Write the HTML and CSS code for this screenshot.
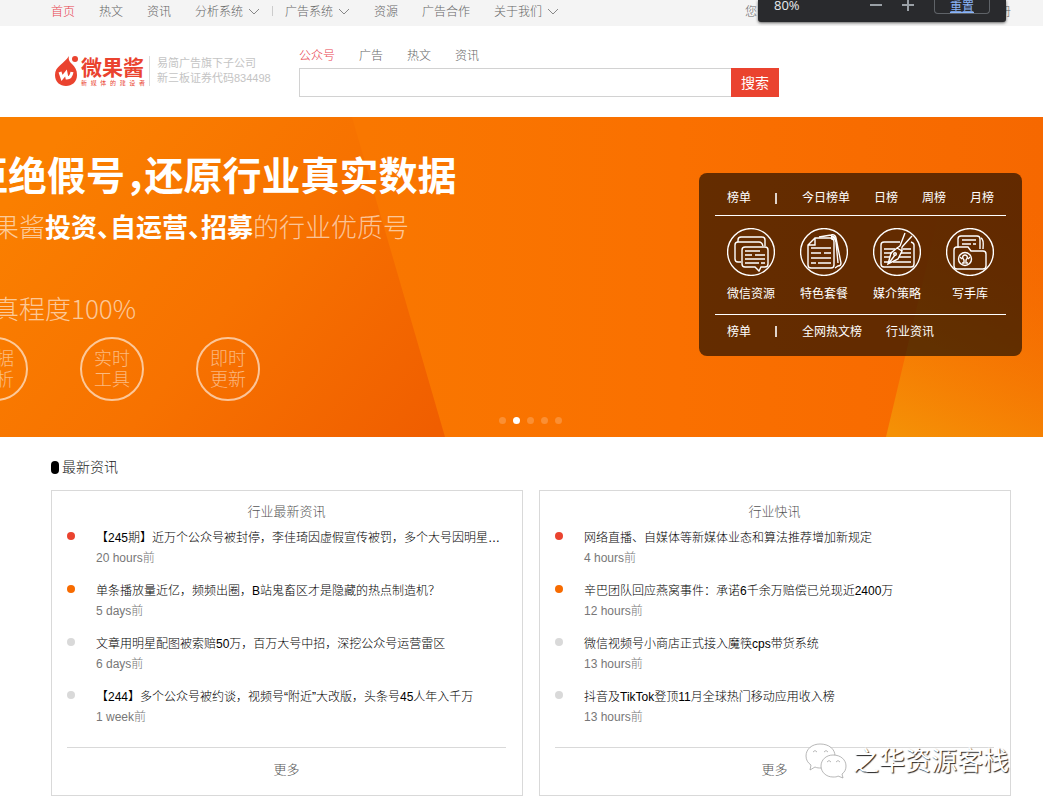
FILE: index.html
```html
<!DOCTYPE html>
<html lang="zh-CN">
<head>
<meta charset="utf-8">
<meta name="viewport" content="width=device-width, initial-scale=1">
<title>微果酱</title>
<link rel="stylesheet" href="styles.css">
</head>
<body>
<div class="topbar">
  <nav class="topnav" aria-label="主导航">
    <a class="active" href="#">首页</a>
    <a href="#">热文</a>
    <a href="#">资讯</a>
    <div class="topnav-pair">
      <a href="#">分析系统<svg class="chevron" viewBox="0 0 12 8"><path d="M1 1l5 5 5-5"/></svg></a>
      <span class="topnav-rule"></span>
      <a href="#">广告系统<svg class="chevron" viewBox="0 0 12 8"><path d="M1 1l5 5 5-5"/></svg></a>
    </div>
    <a href="#">资源</a>
    <a href="#">广告合作</a>
    <a href="#">关于我们<svg class="chevron" viewBox="0 0 12 8"><path d="M1 1l5 5 5-5"/></svg></a>
  </nav>
  <div class="account"><span>您</span><a href="#">册</a></div>
</div>

<div class="zoom-popup">
  <span class="zoom-value">80%</span>
  <button class="zoom-step" type="button" aria-label="缩小"><svg viewBox="0 0 12 12"><path d="M0 5h12"/></svg></button>
  <button class="zoom-step" type="button" aria-label="放大"><svg viewBox="0 0 12 12"><path d="M0 5h12M6 0v11"/></svg></button>
  <button class="zoom-reset" type="button">重置</button>
</div>

<header class="header">
  <a class="brand" href="#">
    <svg class="brand-mark" viewBox="0 0 24 32">
      <path class="brand-drop" d="M14 1C13 5 15 7 17 9C20 12 22 15 22 20C22 27 17 31 11 31C5 31 0 27 0 20C0 11 9 9 14 1Z"/>
      <circle class="brand-drop" cx="20" cy="4" r="3"/>
      <path class="brand-w" d="M5 17l2 6 4-5 1 5q4 0 5-6"/>
    </svg>
    <span class="brand-words">
      <span class="brand-name">微果酱</span>
      <span class="brand-sub">新媒体的建设者</span>
    </span>
    <span class="slogan">易简广告旗下子公司<br>新三板证券代码834498</span>
  </a>
  <form class="search">
    <div class="search-tabs">
      <a class="active" href="#">公众号</a>
      <a href="#">广告</a>
      <a href="#">热文</a>
      <a href="#">资讯</a>
    </div>
    <div class="search-row">
      <input class="search-input" type="text" aria-label="搜索内容">
      <button class="search-button" type="button">搜索</button>
    </div>
  </form>
</header>

<section class="banner">
  <svg class="banner-art" viewBox="0 0 1043 320" preserveAspectRatio="none">
    <defs>
      <linearGradient id="base" x1="0" y1="0" x2="1" y2="0">
        <stop offset="0.35" stop-color="#f97700"/><stop offset="0.65" stop-color="#fa7000"/><stop offset="1" stop-color="#f66800"/>
      </linearGradient>
      <linearGradient id="left" gradientUnits="userSpaceOnUse" x1="60" y1="20" x2="430" y2="320">
        <stop offset="0" stop-color="#fa7f00"/><stop offset="0.5" stop-color="#f77200"/><stop offset="1" stop-color="#f05e00"/>
      </linearGradient>
      <linearGradient id="corner" gradientUnits="userSpaceOnUse" x1="900" y1="320" x2="1010" y2="80">
        <stop offset="0" stop-color="#f59106"/><stop offset="1" stop-color="#f56c02" stop-opacity="0"/>
      </linearGradient>
    </defs>
    <path fill="url(#base)" d="M0 0H1043V320H0z"/>
    <path fill="url(#left)" d="M0 0H352L445 320H0z"/>
    <path fill="url(#corner)" d="M886 320L962 0H1043V320z"/>
  </svg>
  <div class="slide">
    <h1 class="slide-title">拒绝假号<span class="half">，</span>还原行业真实数据</h1>
    <p class="slide-line">果酱<b>投资<span class="half">、</span>自运营<span class="half">、</span>招募</b>的行业优质号</p>
    <p class="slide-line slide-rate">真程度100%</p>
    <div class="badges">
      <span>数据<br>分析</span><span>实时<br>工具</span><span>即时<br>更新</span>
    </div>
  </div>

  <aside class="panel">
    <div class="panel-row panel-top">
      <a href="#">榜单</a><i class="bar"></i><a href="#">今日榜单</a><a href="#">日榜</a><a href="#">周榜</a><a href="#">月榜</a>
    </div>
    <div class="panel-icons">
      <a href="#"><svg viewBox="0 0 48 48">
        <circle cx="24" cy="24" r="23.4"/>
        <path d="M11 14V12Q11 9 14 9H35Q38 9 38 12V18"/>
        <path d="M14 34H11Q8 34 8 31V17Q8 14 11 14H32Q35 14 36 18"/>
        <path d="M18 19H38Q41 19 41 22V36Q41 39 38 39H34L32 43L28 39H18Q15 39 15 36V22Q15 19 18 19Z"/>
        <path d="M18 23H33M18 27H25M28 27H38M18 31H38M18 35H32M34 35H38"/>
      </svg>微信资源</a>
      <a href="#"><svg viewBox="0 0 48 48">
        <circle cx="24" cy="24" r="23.4"/>
        <path d="M15 10H30Q34 10 34 14V37Q34 40 31 40H11Q8 40 8 37V17ZM15 10V17H8"/>
        <path d="M19 9L31 7Q35 6 36 10L41 35Q41 38 38 38L35 40M31 8Q35 9 36 14L38 35"/>
        <circle cx="33" cy="10" r="1.5"/>
        <path d="M11 20H31M11 25H21M24 25H31M11 30H31M11 35H16M18 35H31"/>
      </svg>特色套餐</a>
      <a href="#"><svg viewBox="0 0 48 48">
        <circle cx="24" cy="24" r="23.4"/>
        <path d="M27 14H11Q8 14 8 17V36Q8 39 11 39H38Q41 39 41 36V17Q41 15 38 14"/>
        <path d="M11 21H22M30 21H38M11 25H19M28 25H38M11 29H17M26 29H38M11 34H15M20 34H38"/>
        <path d="M32 5L27 18M39 8L29 19M24 20L29 23L25 31L15 36L18 25ZM16 35L22 27M27 18L24 20M29 19V23"/>
        <circle cx="22" cy="26" r="1.3"/>
      </svg>媒介策略</a>
      <a href="#"><svg viewBox="0 0 48 48">
        <circle cx="24" cy="24" r="23.4"/>
        <path d="M12 20V11Q12 8 15 8H31Q34 8 34 11V21M35 10Q38 11 37 21M16 12H30M16 16H25M27 16H30"/>
        <path d="M8 38V22Q8 19 11 19H22L25 23H37Q40 23 40 26V38Q40 41 37 41H11Q8 41 8 38Z"/>
        <circle cx="19" cy="31" r="6.5"/>
        <path d="M16 35H18V32Q16 30 17 28Q19 26 21 28Q22 30 20 32V35H22M14 29L16 31M24 29L22 31"/>
      </svg>写手库</a>
    </div>
    <div class="panel-row panel-bottom">
      <a href="#">榜单</a><i class="bar"></i><a href="#">全网热文榜</a><a href="#">行业资讯</a>
    </div>
  </aside>

  <div class="dots">
    <button type="button" aria-label="第1张"></button>
    <button class="current" type="button" aria-label="第2张"></button>
    <button type="button" aria-label="第3张"></button>
    <button type="button" aria-label="第4张"></button>
    <button type="button" aria-label="第5张"></button>
  </div>
</section>

<main class="news">
  <h2 class="news-heading">最新资讯</h2>
  <div class="cards">
    <section class="card">
      <h3>行业最新资讯</h3>
      <ul>
        <li class="hot"><a href="#">【245期】近万个公众号被封停，李佳琦因虚假宣传被罚，多个大号因明星代言翻车</a><time>20 hours前</time></li>
        <li class="warm"><a href="#">单条播放量近亿，频频出圈，B站鬼畜区才是隐藏的热点制造机？</a><time>5 days前</time></li>
        <li><a href="#">文章用明星配图被索赔50万，百万大号中招，深挖公众号运营雷区</a><time>6 days前</time></li>
        <li><a href="#">【244】多个公众号被约谈，视频号“附近”大改版，头条号45人年入千万</a><time>1 week前</time></li>
      </ul>
      <a class="more" href="#">更多</a>
    </section>
    <section class="card">
      <h3>行业快讯</h3>
      <ul>
        <li class="hot"><a href="#">网络直播、自媒体等新媒体业态和算法推荐增加新规定</a><time>4 hours前</time></li>
        <li class="warm"><a href="#">辛巴团队回应燕窝事件：承诺6千余万赔偿已兑现近2400万</a><time>12 hours前</time></li>
        <li><a href="#">微信视频号小商店正式接入魔筷cps带货系统</a><time>13 hours前</time></li>
        <li><a href="#">抖音及TikTok登顶11月全球热门移动应用收入榜</a><time>13 hours前</time></li>
      </ul>
      <a class="more" href="#">更多</a>
    </section>
  </div>
  <div class="watermark">
    <svg viewBox="0 0 42 36">
      <path d="M15 1C7 1 1 6 1 13C1 17 3 20 6 22L5 27L10 24C12 25 14 25 16 25C24 25 30 20 30 13C30 6 24 1 15 1Z"/>
      <path d="M28 12C21 12 16 17 16 23C16 29 21 34 28 34C30 34 32 34 33 33L38 35L37 31C40 29 41 26 41 23C41 17 36 12 28 12Z"/>
      <path d="M8 9Q10 6 12 9M19 9Q21 6 23 9M22 19Q24 16 26 19M31 19Q33 16 35 19"/>
    </svg>
    <span>之华资源客栈</span>
  </div>
</main>
</body>
</html>
```

FILE: styles.css
```css
* {
  box-sizing: border-box;
}

body {
  margin: 0;
  background: #fff;
  color: #000;
  font: 300 12px/20px "Liberation Sans", "Noto Sans CJK SC", sans-serif;
  text-spacing-trim: space-all;
}

a {
  color: inherit;
  text-decoration: none;
}

button {
  padding: 0;
  border: 0;
  font: inherit;
}

h1, h2, h3, p, ul {
  margin: 0;
  padding: 0;
  font-weight: 300;
}

svg {
  fill: none;
}

/* Top bar */
.topbar {
  display: flex;
  justify-content: space-between;
  height: 26px;
  padding: 0 32px 0 51px;
  background: #f4f4f4;
  color: #666;
  line-height: 24px;
}

.topnav {
  display: flex;
  gap: 24px;
}

.topnav a {
  white-space: nowrap;
}

.topnav-pair {
  display: flex;
  gap: 12px;
}

.topnav-rule {
  width: 1px;
  height: 10px;
  margin-top: 6px;
  background: #ccc;
}

.chevron {
  width: 12px;
  height: 8px;
  margin-left: 5px;
  stroke: #888;
}

.active {
  color: #e8434f;
}

.account {
  display: flex;
  justify-content: space-between;
  width: 266px;
}

.zoom-popup {
  position: absolute;
  top: 0;
  right: 37px;
  display: flex;
  align-items: flex-start;
  gap: 20px;
  width: 248px;
  height: 22px;
  padding: 0 16px;
  border-radius: 0 0 3px 3px;
  background: #292a2d;
  box-shadow: 0 1px 3px rgba(0, 0, 0, 0.6);
  color: #e8eaed;
}

.zoom-value {
  flex: 1;
  font: 400 13px/10px "Open Sans", sans-serif;
}

.zoom-step {
  width: 12px;
  height: 12px;
  background: none;
}

.zoom-step svg {
  display: block;
  stroke: #9aa0a6;
  stroke-width: 2;
}

.zoom-reset {
  width: 56px;
  height: 14px;
  border: 1px solid #5f6368;
  border-top: 0;
  border-radius: 0 0 4px 4px;
  background: none;
  color: #8ab4f8;
  font-weight: 400;
  line-height: 10px;
  text-decoration: underline;
}

/* Header */
.header {
  display: flex;
  gap: 28px;
  padding: 20px 32px 20px 55px;
}

.brand {
  display: flex;
  flex: none;
  align-items: center;
  width: 216px;
  height: 50px;
  color: #ea432f;
}

.brand-mark {
  width: 24px;
  height: 32px;
}

.brand-drop {
  fill: #ea432f;
}

.brand-w {
  stroke: #fff;
  stroke-width: 3;
}

.brand-words {
  display: flex;
  flex-direction: column;
  width: 64px;
  margin-left: 2px;
}

.brand-name {
  font-size: 21px;
  font-weight: 700;
  line-height: 24px;
}

.brand-sub {
  font-size: 6px;
  font-weight: 400;
  line-height: 6px;
  text-align-last: justify;
}

.slogan {
  margin-left: 4px;
  padding-left: 7px;
  border-left: 1px solid #ddd;
  color: #c4c4c4;
  font-size: 11px;
  font-weight: 400;
  line-height: 15px;
  white-space: nowrap;
}

.search {
  flex: 0 1 480px;
}

.search-tabs {
  display: flex;
  gap: 24px;
  height: 22px;
  color: #666;
}

.search-row {
  display: flex;
}

.search-input {
  flex: 1;
  min-width: 0;
  height: 29px;
  border: 1px solid #d2d2d2;
  border-right: 0;
  border-radius: 0;
}

.search-button {
  width: 48px;
  background: #ea432f;
  color: #fff;
  font-size: 14px;
  font-weight: 400;
}

/* Banner */
.banner {
  position: relative;
  height: 320px;
  overflow: hidden;
  color: #fff;
}

.banner-art {
  position: absolute;
  inset: 0;
  width: 100%;
  height: 100%;
}

.slide {
  position: relative;
  padding-top: 32px;
  font-family: "Noto Sans CJK SC", sans-serif;
  white-space: nowrap;
}

.slide-title {
  margin-left: -31px;
  font-size: 39px;
  font-weight: 700;
  line-height: 48px;
}

.half {
  font-feature-settings: "halt";
}

.slide-line {
  margin: 11px 0 0 -7px;
  color: rgba(255, 255, 255, 0.6);
  font-size: 26px;
  line-height: 36px;
}

.slide-line b {
  color: #fff;
  font-weight: 700;
}

.slide-rate {
  margin-top: 46px;
}

.badges {
  display: flex;
  gap: 52px;
  margin: 11px 0 0 -36px;
}

.badges span {
  width: 64px;
  height: 64px;
  padding-top: 8px;
  border: 2px solid rgba(255, 255, 255, 0.6);
  border-radius: 50%;
  color: rgba(255, 255, 255, 0.5);
  font-size: 18px;
  line-height: 21px;
  text-align: center;
}

.panel {
  position: absolute;
  top: 56px;
  right: 21px;
  width: 323px;
  padding: 0 16px;
  border-radius: 8px;
  background: rgba(0, 0, 0, 0.6);
  font-weight: 400;
  white-space: nowrap;
}

.panel-row {
  display: flex;
  align-items: center;
  gap: 24px;
  padding: 0 0 0 12px;
}

.panel-top {
  height: 43px;
  padding-top: 8px;
  border-bottom: 1px solid #fff;
}

.panel-bottom {
  height: 42px;
  padding-bottom: 8px;
  border-top: 1px solid #fff;
}

.bar {
  width: 2px;
  height: 11px;
  margin-right: 1px;
  background: #e0d4cc;
}

.panel-icons {
  display: flex;
  justify-content: space-between;
  padding: 12px 12px 10px;
}

.panel-icons a {
  display: flex;
  flex-direction: column;
  gap: 8px;
  width: 48px;
  text-align: center;
}

.panel-icons svg {
  width: 48px;
  height: 48px;
  stroke: #fff;
  stroke-width: 1.4;
}

.dots {
  position: absolute;
  bottom: 13px;
  left: 499px;
  display: flex;
  gap: 7px;
}

.dots button {
  width: 7px;
  height: 7px;
  border-radius: 50%;
  background: rgba(255, 255, 255, 0.2);
}

.dots .current {
  background: #fff;
}

/* News */
.news {
  position: relative;
  padding: 20px 32px 11px 51px;
}

.news-heading {
  display: flex;
  align-items: center;
  gap: 3px;
  color: #222;
  font-size: 14px;
}

.news-heading::before {
  width: 8px;
  height: 13px;
  border-radius: 4px;
  background: #000;
  content: "";
}

.cards {
  display: grid;
  grid-template-columns: 1fr 1fr;
  gap: 16px;
  margin-top: 13px;
}

.card {
  min-width: 0;
  padding: 11px 16px 3px 15px;
  border: 1px solid #d9d9d9;
}

.card h3 {
  color: #555;
  font-size: 13px;
  text-align: center;
}

.card ul {
  display: grid;
  gap: 13px;
  padding: 6px 0 20px;
  list-style: none;
}

.card li {
  display: grid;
  grid-template-columns: 8px minmax(0, 1fr);
  column-gap: 21px;
}

.card li::before {
  width: 8px;
  height: 8px;
  margin-top: 4px;
  border-radius: 50%;
  background: #d9d9d9;
  content: "";
}

.card .hot::before {
  background: #ea432f;
}

.card .warm::before {
  background: #f76b00;
}

.card li a {
  overflow: hidden;
  text-overflow: ellipsis;
  white-space: nowrap;
}

.card time {
  grid-column: 2;
  color: #777;
}

.more {
  display: block;
  border-top: 1px solid #d9d9d9;
  color: #555;
  font-size: 13px;
  line-height: 44px;
  text-align: center;
}

.watermark {
  position: absolute;
  right: 34px;
  bottom: 28px;
  display: flex;
  align-items: center;
  gap: 6px;
  color: #fff;
  font-size: 26px;
  font-weight: 400;
  line-height: 36px;
  text-shadow: 1px 1px 1px #222;
}

.watermark svg {
  width: 42px;
  height: 36px;
  fill: #fff;
  stroke: #999;
  stroke-width: 0.7;
}
```
